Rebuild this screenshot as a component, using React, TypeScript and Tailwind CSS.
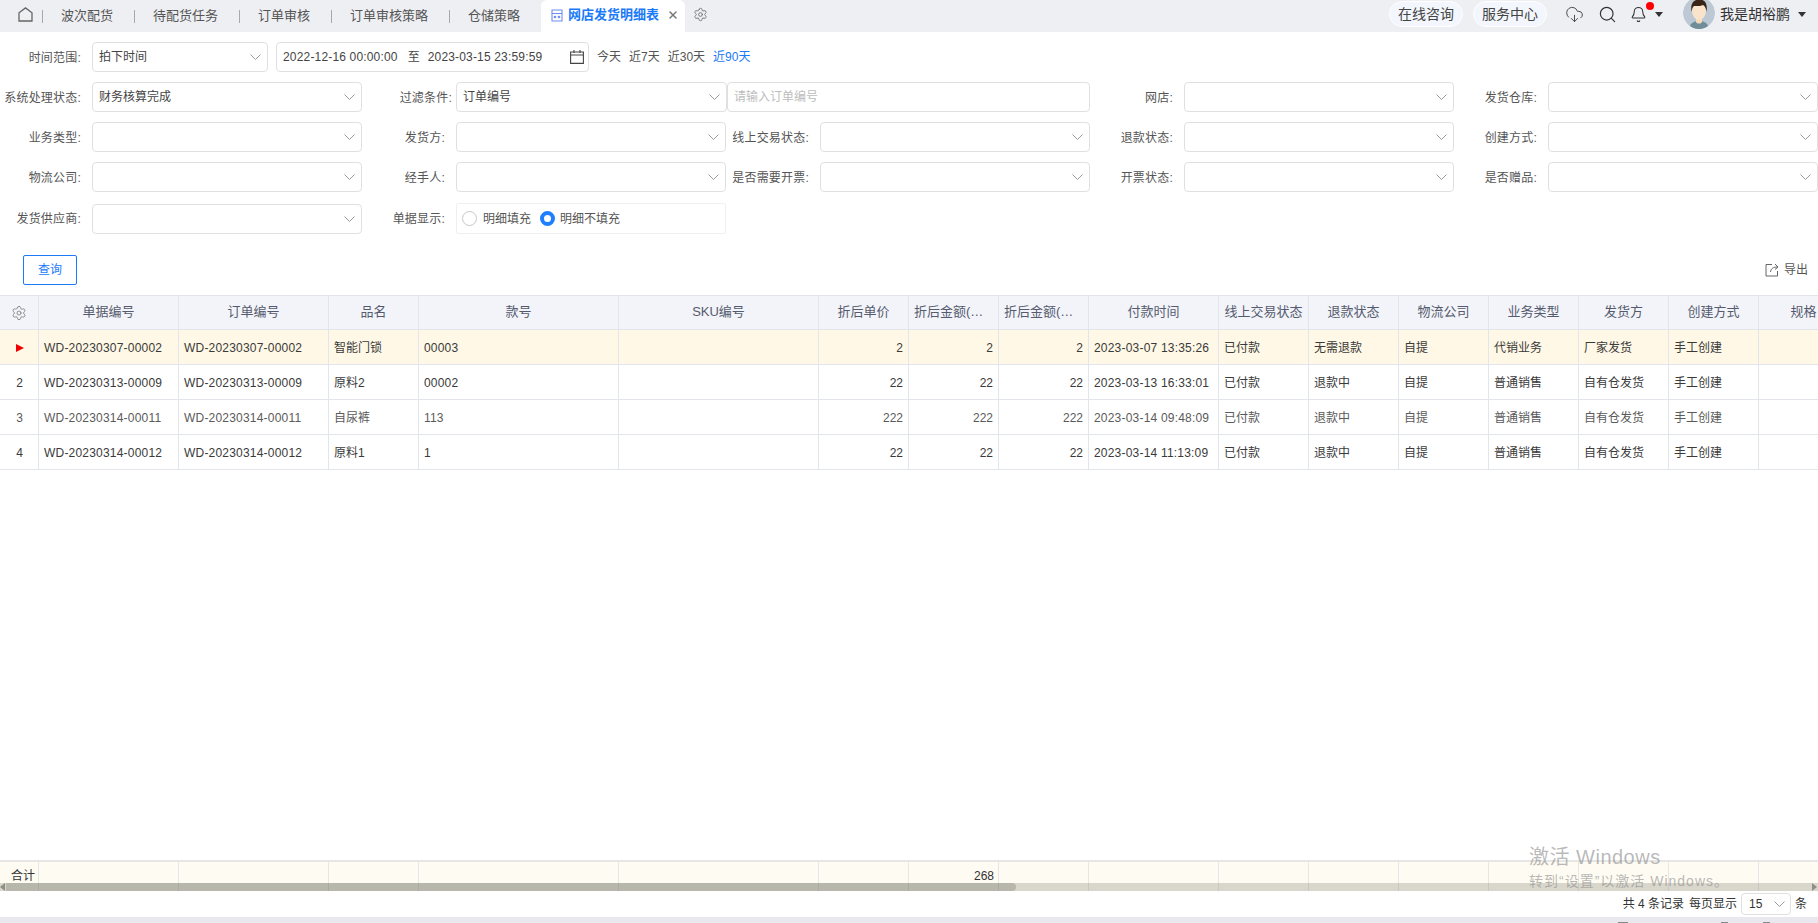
import React from 'react';
import { Settings, CloudDownload, Search, Bell, X } from 'lucide-react';

const columns = [
  { title: '单据编号', width: 'w-[140px]', num: true },
  { title: '订单编号', width: 'w-[150px]', num: true },
  { title: '品名', width: 'w-[90px]' },
  { title: '款号', width: 'w-[200px]', num: true },
  { title: 'SKU编号', width: 'w-[200px]' },
  { title: '折后单价', width: 'w-[90px]', right: true },
  { title: '折后金额(…', width: 'w-[90px]', right: true, cut: true },
  { title: '折后金额(…', width: 'w-[90px]', right: true, cut: true },
  { title: '付款时间', width: 'w-[130px]', num: true },
  { title: '线上交易状态', width: 'w-[90px]' },
  { title: '退款状态', width: 'w-[90px]' },
  { title: '物流公司', width: 'w-[90px]' },
  { title: '业务类型', width: 'w-[90px]' },
  { title: '发货方', width: 'w-[90px]' },
  { title: '创建方式', width: 'w-[90px]' },
  { title: '规格', width: 'w-[90px]' },
];

const rows = [
  ['WD-20230307-00002', 'WD-20230307-00002', '智能门锁', '00003', '', '2', '2', '2', '2023-03-07 13:35:26', '已付款', '无需退款', '自提', '代销业务', '厂家发货', '手工创建', ''],
  ['WD-20230313-00009', 'WD-20230313-00009', '原料2', '00002', '', '22', '22', '22', '2023-03-13 16:33:01', '已付款', '退款中', '自提', '普通销售', '自有仓发货', '手工创建', ''],
  ['WD-20230314-00011', 'WD-20230314-00011', '自尿裤', '113', '', '222', '222', '222', '2023-03-14 09:48:09', '已付款', '退款中', '自提', '普通销售', '自有仓发货', '手工创建', ''],
  ['WD-20230314-00012', 'WD-20230314-00012', '原料1', '1', '', '22', '22', '22', '2023-03-14 11:13:09', '已付款', '退款中', '自提', '普通销售', '自有仓发货', '手工创建', ''],
];

const Chevron = () => (
  <svg width="11" height="6" viewBox="0 0 11 6" fill="none" stroke="#9a9a9a" strokeWidth="1" className="shrink-0">
    <path d="M0.5 0.5 L5.5 5.5 L10.5 0.5" />
  </svg>
);

const Caret = () => (
  <svg width="8" height="5" viewBox="0 0 8 5" fill="#333" className="shrink-0">
    <path d="M0 0 H8 L4 5 Z" />
  </svg>
);

const Select = ({ value, className = 'w-[270px]' }: { value?: string; className?: string }) => (
  <div className={`${className} h-[30px] shrink-0 flex items-center justify-between pl-[6px] pr-[6px] border border-[#e0e0e0] rounded-[4px] bg-white text-[#444]`}>
    <span>{value}</span>
    <Chevron />
  </div>
);

const Label = ({ children, tight }: { children: React.ReactNode; tight?: boolean }) => (
  <div className={`w-[92px] shrink-0 pt-[1px] text-right whitespace-nowrap tracking-[0.2px] text-[#555] ${tight ? 'pr-[4px]' : 'pr-[11px]'}`}>{children}</div>
);

const Field = ({ label, value }: { label: string; value?: string }) => (
  <div className="w-[364px] shrink-0 flex items-center">
    <Label>{label}:</Label>
    <Select value={value} />
  </div>
);

const Tab = ({ children }: { children: string }) => (
  <>
    <div className="w-px h-[13px] bg-[#a9a9ad]" />
    <div className="pl-[18px] pr-[21px] text-[13px] text-[#555] whitespace-nowrap">{children}</div>
  </>
);

const Radio = ({ checked }: { checked?: boolean }) =>
  checked ? (
    <div className="w-[15px] h-[15px] rounded-full border-[4px] border-[#1e80ff] bg-white" />
  ) : (
    <div className="w-[15px] h-[15px] rounded-full border border-[#c8c8c8] bg-white" />
  );

export default function App() {
  return (
    <div className="relative h-screen w-full overflow-hidden flex flex-col bg-white text-[12px] font-['Liberation_Sans','Noto_Sans_CJK_SC',sans-serif]">
      {/* top tabs */}
      <div className="h-[32px] shrink-0 flex items-center bg-[#eeeff3]">
        <div className="w-[42px] h-full flex items-center pl-[18px] pb-[3px]">
          <svg width="15" height="15" viewBox="0 0 15 15" fill="none" stroke="#666" strokeWidth="1.3">
            <path d="M1 14 V5.8 L7.5 0.9 L14 5.8 V14 Z" />
          </svg>
        </div>
        <Tab>波次配货</Tab>
        <Tab>待配货任务</Tab>
        <Tab>订单审核</Tab>
        <Tab>订单审核策略</Tab>
        <Tab>仓储策略</Tab>
        <div className="w-[144px] h-full flex items-center bg-white rounded-t-[6px] pl-[10px] pb-[2px]">
          <svg width="12" height="13" viewBox="0 0 12 13" fill="none" stroke="#6f8ff0" strokeWidth="1.1" className="shrink-0">
            <path d="M1 1 H11 V12 H1 Z M1 4.5 H11" />
            <circle cx="4" cy="8" r="0.8" />
            <circle cx="8" cy="8" r="0.8" />
          </svg>
          <span className="ml-[5px] text-[13px] font-bold text-[#1a7af8] whitespace-nowrap">网店发货明细表</span>
          <X size={12} strokeWidth={3} className="ml-[8px] text-[#777]" />
        </div>
        <Settings size={15} strokeWidth={1.3} className="ml-[8px] mb-[3px] text-[#666]" />
        <div className="ml-auto h-full flex items-center pr-[12px] pb-[4px]">
          <div className="w-[74px] h-[26px] flex items-center justify-center rounded-full bg-[#f3f6fc] border border-white text-[14px] text-[#444]">在线咨询</div>
          <div className="ml-[10px] w-[74px] h-[26px] flex items-center justify-center rounded-full bg-[#f3f6fc] border border-white text-[14px] text-[#444]">服务中心</div>
          <CloudDownload size={19} strokeWidth={1.2} className="ml-[18px] text-[#444]" />
          <Search size={19} strokeWidth={1.5} className="ml-[14px] text-[#333]" />
          <div className="relative ml-[13px]">
            <Bell size={17} strokeWidth={1.5} className="text-[#333]" />
            <div className="absolute -top-[4px] left-[16px] w-[8px] h-[8px] rounded-full bg-[#ff0000]" />
          </div>
          <div className="ml-[8px]"><Caret /></div>
          <svg width="32" height="32" viewBox="0 0 32 32" className="ml-[20px] mt-[-2px] shrink-0 rounded-full">
            <circle cx="16" cy="16" r="16" fill="#bcc8d4" />
            <path d="M6 32 C7 25 12 24 16 24 C20 24 25 25 26 32 Z" fill="#6f8e98" />
            <path d="M13 20 H19 V25 C18 27 14 27 13 25 Z" fill="#f5d9bd" />
            <ellipse cx="16" cy="14" rx="7" ry="9" fill="#fae3cb" />
            <path d="M8.5 15 C7 5 12 2.5 16 2.5 C21 2.5 25 5 23.5 15 C23 11 22 9 20 8 C17 9.5 12 9 11 9 C9.5 10 9 12 8.5 15 Z" fill="#3a2418" />
          </svg>
          <span className="ml-[5px] text-[14px] text-[#333] whitespace-nowrap">我是胡裕鹏</span>
          <div className="ml-[8px]"><Caret /></div>
        </div>
      </div>

      {/* filters */}
      <div className="shrink-0 flex flex-col pt-[10px]">
        <div className="flex items-center h-[30px]">
          <Label>时间范围:</Label>
          <Select value="拍下时间" className="w-[176px]" />
          <div className="ml-[8px] w-[313px] h-[30px] flex items-center pl-[6px] pr-[4px] border border-[#e0e0e0] rounded-[4px] text-[#444] whitespace-nowrap">
            <span className="tracking-[0.17px]">2022-12-16 00:00:00</span>
            <span className="ml-[10px]">至</span>
            <span className="ml-[8px] tracking-[0.17px]">2023-03-15 23:59:59</span>
            <svg width="14" height="14" viewBox="0 0 14 14" fill="none" stroke="#444" strokeWidth="1.1" className="ml-auto">
              <path d="M0.6 2 H13.4 V13.4 H0.6 Z M0.6 5 H13.4 M4 0 V3 M10 0 V3" />
            </svg>
          </div>
          <span className="ml-[8px] text-[#555]">今天</span>
          <span className="ml-[8px] text-[#555]">近7天</span>
          <span className="ml-[8px] text-[#555]">近30天</span>
          <span className="ml-[8px] text-[#1a7af8]">近90天</span>
        </div>
        <div className="flex items-center mt-[10px]">
          <Field label="系统处理状态" value="财务核算完成" />
          <div className="w-[363px] shrink-0 flex items-center">
            <Label tight>过滤条件:</Label>
            <Select value="订单编号" className="w-[271px]" />
          </div>
          <div className="w-[363px] mr-[2px] shrink-0 h-[30px] flex items-center pl-[6px] border border-[#e0e0e0] rounded-[4px] text-[#bdbdbd]">请输入订单编号</div>
          <Field label="网店" />
          <Field label="发货仓库" />
        </div>
        <div className="flex items-center mt-[10px]">
          <Field label="业务类型" />
          <Field label="发货方" />
          <Field label="线上交易状态" />
          <Field label="退款状态" />
          <Field label="创建方式" />
        </div>
        <div className="flex items-center mt-[10px]">
          <Field label="物流公司" />
          <Field label="经手人" />
          <Field label="是否需要开票" />
          <Field label="开票状态" />
          <Field label="是否赠品" />
        </div>
        <div className="flex items-center mt-[11px]">
          <Field label="发货供应商" />
          <Label>单据显示:</Label>
          <div className="w-[270px] h-[31px] flex items-center pl-[5px] border border-[#f0f0f0] rounded-[2px] text-[#555]">
            <Radio />
            <span className="ml-[6px]">明细填充</span>
            <div className="ml-[9px]"><Radio checked /></div>
            <span className="ml-[5px]">明细不填充</span>
          </div>
        </div>
        <div className="flex items-center justify-between mt-[21px] mb-[10px] pl-[23px] pr-[10px]">
          <div className="w-[54px] h-[30px] flex items-center justify-center border border-[#1a7af8] rounded-[2px] text-[#1a7af8]">查询</div>
          <div className="flex items-center text-[#555]">
            <svg width="14" height="14" viewBox="0 0 14 14" fill="none" stroke="#666" strokeWidth="1" className="mr-[5px]">
              <path d="M7 1.5 H1 V13 H12.5 V8" />
              <path d="M5.5 9 C6 5.5 8 4 12.5 4 M10 1 L13 4 L10 6.5" />
            </svg>
            导出
          </div>
        </div>
      </div>

      {/* table */}
      <div className="flex-1 min-h-0 overflow-hidden flex flex-col">
        <div className="flex h-[35px] shrink-0 bg-[#f3f4f9] border-t border-b border-[#e3e5ec] text-[13px] text-[#555b6e]">
          <div className="w-[39px] shrink-0 flex items-center justify-center border-r border-[#e3e5ec]">
            <Settings size={16} strokeWidth={1.2} className="text-[#777]" />
          </div>
          {columns.map((col, j) => (
            <div key={j} className={`${col.width} shrink-0 px-[5px] leading-[32px] whitespace-nowrap border-r border-[#e3e5ec] ${col.cut ? 'text-left' : 'text-center'}`}>
              {col.title}
            </div>
          ))}
        </div>
        {rows.map((row, i) => (
          <div key={i} className={`flex h-[35px] shrink-0 border-b border-[#e3e5ec] ${i === 0 ? 'bg-[#fff8e6]' : ''} ${i === 2 ? 'text-[#5a5a5a]' : 'text-[#3a3a3a]'}`}>
            <div className="w-[39px] shrink-0 flex items-center justify-center pl-[1px] pt-[1px] border-r border-[#e3e5ec]">
              {i === 0 ? (
                <svg width="8" height="8" viewBox="0 0 8 8" fill="#f00000">
                  <path d="M0 0 L8 4 L0 8 Z" />
                </svg>
              ) : (
                i + 1
              )}
            </div>
            {columns.map((col, j) => (
              <div key={j} className={`${col.width} shrink-0 px-[5px] pt-[1px] flex items-center whitespace-nowrap border-r border-[#e3e5ec] ${col.right ? 'justify-end' : ''} ${col.num ? 'tracking-[0.2px]' : ''}`}>
                {row[j]}
              </div>
            ))}
          </div>
        ))}
      </div>

      {/* totals, with the browser scrollbar lying over it */}
      <div className="relative h-[31px] shrink-0 flex bg-[#fefbf2] border-t-2 border-[#e6e6e6] text-[#333]">
        <div className="w-[39px] shrink-0 flex items-center pl-[11px] pb-[1px] border-r border-[#e6e6e6]">合计</div>
        {columns.map((col, j) => (
          <div key={j} className={`${col.width} shrink-0 pl-[5px] pr-[4px] pb-[1px] flex items-center justify-end border-r border-[#e6e6e6]`}>
            {j === 6 ? '268' : ''}
          </div>
        ))}
        <div className="absolute left-0 right-0 bottom-0 h-[8px] bg-[#6b6b5a]/25 flex items-stretch">
          <svg width="6" height="8" viewBox="0 0 6 8" fill="#8f8f8a" className="shrink-0">
            <path d="M5 0 V8 L0 4 Z" />
          </svg>
          <div className="w-[1010px] rounded-r-[4px] bg-[#55564c]/25" />
          <svg width="6" height="8" viewBox="0 0 6 8" fill="#8f8f8a" className="ml-auto shrink-0">
            <path d="M0 0 V8 L5 4 Z" />
          </svg>
        </div>
      </div>

      {/* pager */}
      <div className="h-[26px] shrink-0 flex items-center justify-end pr-[11px] text-[#333] whitespace-nowrap">
        <span>共 4 条记录</span>
        <span className="ml-[5px]">每页显示</span>
        <div className="ml-[4px] w-[50px] h-[22px] flex items-center justify-between pl-[7px] pr-[5px] border border-[#e0e0e0] rounded-[4px]">
          <span>15</span>
          <Chevron />
        </div>
        <span className="ml-[4px]">条</span>
      </div>
      <div className="h-[6px] shrink-0 flex items-end pl-[1618px] bg-[#e8e8ee]">
        <div className="w-[10px] h-[1px] bg-[#888]" />
        <div className="ml-[93px] w-[7px] h-[1px] bg-[#888]" />
        <div className="ml-[35px] w-[7px] h-[1px] bg-[#888]" />
      </div>

      {/* windows activation watermark */}
      <div className="absolute left-[1529px] top-[844px] pointer-events-none whitespace-nowrap text-[#8a8a8a]/60">
        <div className="text-[20px] leading-[26px] tracking-[0.5px]">激活 Windows</div>
        <div className="text-[14px] leading-[20px] mt-[1px] tracking-[1px]">转到“设置”以激活 Windows。</div>
      </div>
    </div>
  );
}
